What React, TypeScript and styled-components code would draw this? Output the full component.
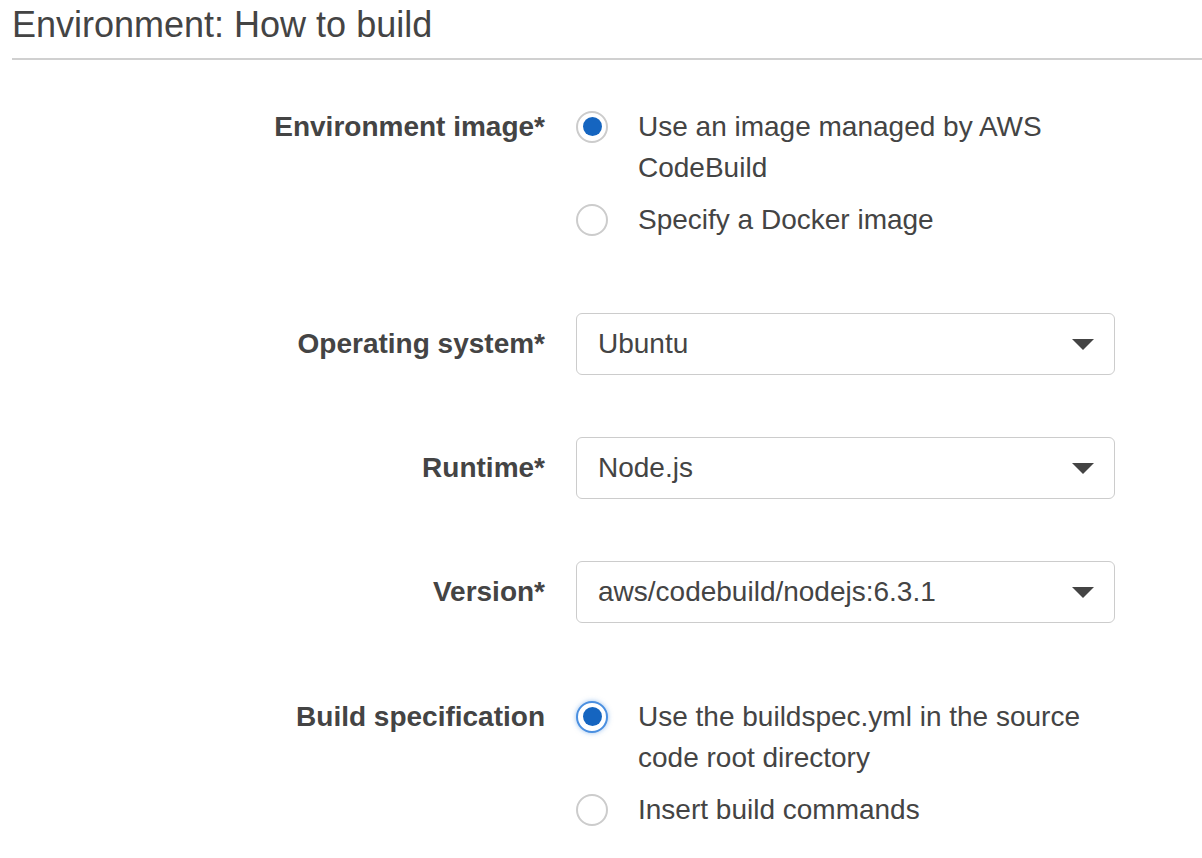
import React from "react";
import styled, { createGlobalStyle } from "styled-components";

const GlobalStyle = createGlobalStyle`
  body {
    margin: 0;
    background: #ffffff;
    font-family: "Liberation Sans", Arial, sans-serif;
    color: #444444;
  }
`;

type Option = { text: string; checked?: boolean; focused?: boolean };

type Field =
  | { label: string; kind: "radio"; options: Option[] }
  | { label: string; kind: "select"; value: string };

const FIELDS: Field[] = [
  {
    label: "Environment image*",
    kind: "radio",
    options: [
      { text: "Use an image managed by AWS CodeBuild", checked: true },
      { text: "Specify a Docker image" },
    ],
  },
  { label: "Operating system*", kind: "select", value: "Ubuntu" },
  { label: "Runtime*", kind: "select", value: "Node.js" },
  { label: "Version*", kind: "select", value: "aws/codebuild/nodejs:6.3.1" },
  {
    label: "Build specification",
    kind: "radio",
    options: [
      {
        text: "Use the buildspec.yml in the source code root directory",
        checked: true,
        focused: true,
      },
      { text: "Insert build commands" },
    ],
  },
];

const Caret = () => (
  <svg width="22" height="11" viewBox="0 0 22 11">
    <path d="M0 0 L22 0 L11 11 Z" fill="#444444" />
  </svg>
);

export default function App() {
  return (
    <>
      <GlobalStyle />
      <Section>
        <Title>Environment: How to build</Title>
        <Form>
          {FIELDS.map((field) => (
            <React.Fragment key={field.label}>
              <Label $kind={field.kind}>{field.label}</Label>
              {field.kind === "radio" ? (
                <RadioGroup>
                  {field.options.map((opt) => (
                    <RadioOption key={opt.text}>
                      <Radio $checked={!!opt.checked} $focused={!!opt.focused} />
                      <OptionText>{opt.text}</OptionText>
                    </RadioOption>
                  ))}
                </RadioGroup>
              ) : (
                <Select>
                  <span>{field.value}</span>
                  <Caret />
                </Select>
              )}
            </React.Fragment>
          ))}
        </Form>
      </Section>
    </>
  );
}

const Section = styled.div`
  padding-left: 12px;
`;

const Title = styled.h2`
  margin: 0;
  padding-top: 5px;
  padding-bottom: 13px;
  font-size: 36px;
  line-height: 40px;
  font-weight: normal;
  color: #444444;
  border-bottom: 2px solid #d0d0d0;
`;

const Form = styled.div`
  display: grid;
  grid-template-columns: 533px 539px;
  column-gap: 31px;
  row-gap: 62px;
  padding-top: 35px;
`;

const Label = styled.div<{ $kind: "radio" | "select" }>`
  text-align: right;
  font-size: 28px;
  font-weight: bold;
  color: #444444;
  line-height: ${(p) => (p.$kind === "radio" ? "41px" : "62px")};
  padding-top: ${(p) => (p.$kind === "radio" ? "11px" : "0")};
`;

const RadioGroup = styled.div`
  display: flex;
  flex-direction: column;
  gap: 11px;
  padding: 11px 0;
`;

const RadioOption = styled.div`
  display: flex;
  align-items: flex-start;
  gap: 30px;
`;

const Radio = styled.span<{ $checked: boolean; $focused: boolean }>`
  flex: none;
  box-sizing: border-box;
  width: 32px;
  height: 32px;
  margin-top: 4.5px;
  border-radius: 50%;
  border: 2px solid ${(p) => (p.$focused ? "#4a8fe0" : "#cccccc")};
  background: #ffffff;
  display: flex;
  align-items: center;
  justify-content: center;
  box-shadow: ${(p) => (p.$focused ? "0 0 5px rgba(74, 143, 224, 0.55)" : "none")};
  &::after {
    content: "";
    display: ${(p) => (p.$checked ? "block" : "none")};
    width: 19px;
    height: 19px;
    border-radius: 50%;
    background: #1565c0;
  }
`;

const OptionText = styled.span`
  flex: 1;
  font-size: 28px;
  line-height: 41px;
  color: #444444;
`;

const Select = styled.div`
  box-sizing: border-box;
  height: 62px;
  border: 1.5px solid #cccccc;
  border-radius: 6px;
  display: flex;
  align-items: center;
  justify-content: space-between;
  padding: 0 20px 0 21px;
  font-size: 28px;
  color: #444444;
`;
